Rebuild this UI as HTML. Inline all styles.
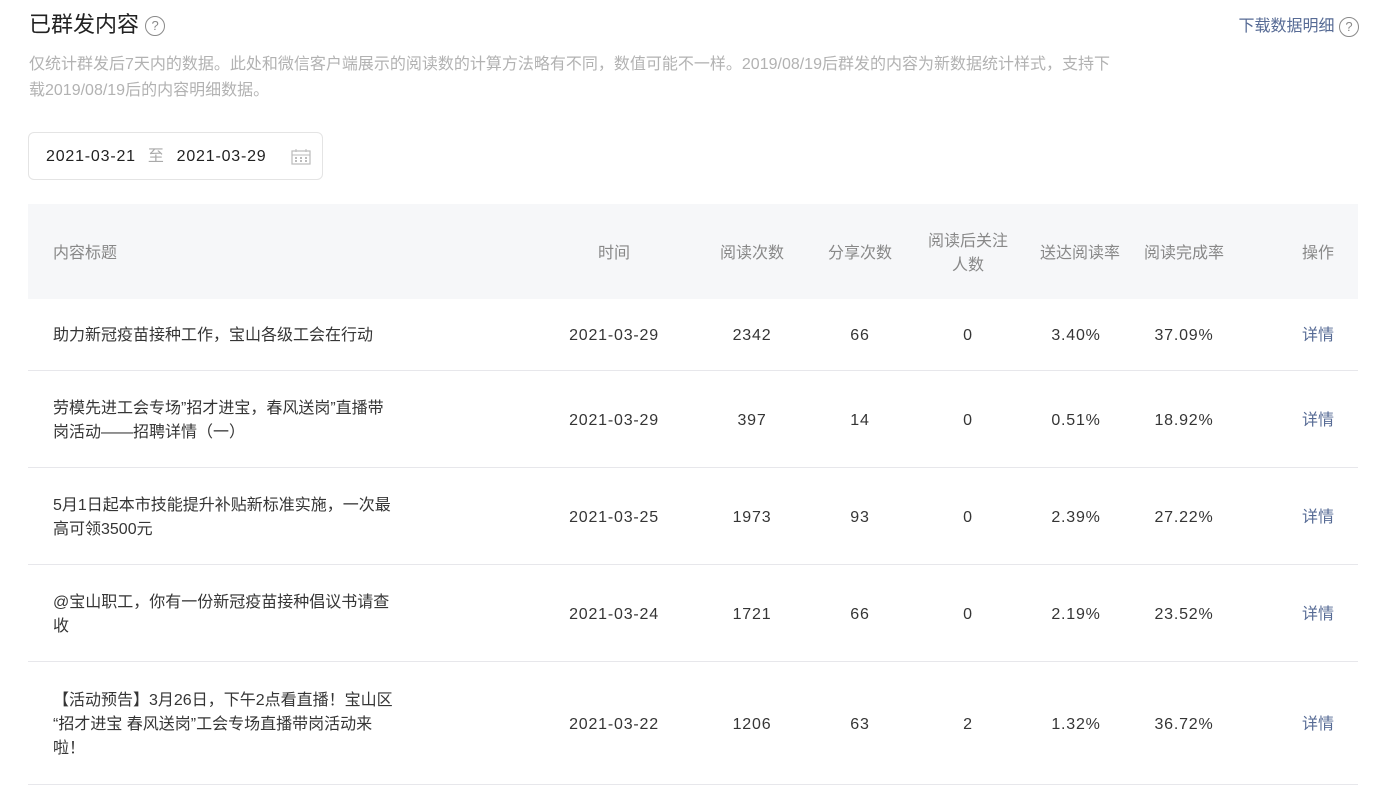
<!DOCTYPE html>
<html><head><meta charset="utf-8"><style>
*{margin:0;padding:0;box-sizing:border-box}
body{width:1390px;height:802px;background:#fff;font-family:"Liberation Sans","Noto Sans CJK SC",sans-serif;color:#353535;position:relative;overflow:hidden}
.q{display:inline-block;width:20px;height:20px;border:1.5px solid #8a8a8a;border-radius:50%;color:#8a8a8a;font-size:13px;line-height:17px;text-align:center;vertical-align:middle}
h1{position:absolute;left:29px;top:9px;font-size:22px;line-height:32px;font-weight:normal;color:#222}
.dl{position:absolute;right:31px;top:14px;font-size:16px;line-height:26px;color:#576b95}
.desc{position:absolute;left:29px;top:52px;width:1170px;font-size:16px;line-height:26px;color:#b2b2b2}
.date{position:absolute;left:28px;top:132px;width:295px;height:48px;border:1px solid #e4e4e4;border-radius:6px;font-size:16px;line-height:48px;padding-left:17px;color:#222;letter-spacing:0.8px}
.date .z{color:#aaa;margin:0 12px}
table{position:absolute;left:28px;top:204px;width:1330px;border-collapse:collapse;font-size:16px;table-layout:fixed}
th{background:#f6f7f9;color:#888;font-weight:normal;height:95px;line-height:24px;white-space:nowrap;overflow:visible;padding-top:4px}
td{border-bottom:1px solid #e7e7eb;line-height:24px;white-space:nowrap;padding-top:4px}
th,td{text-align:center}
td.n{letter-spacing:0.8px}
.t{text-align:left;padding-left:25px}
.op{text-align:right;padding-right:24px}
td.op{color:#576b95}
</style></head><body>
<h1>已群发内容 <span class="q">?</span></h1>
<div class="dl">下载数据明细 <span class="q">?</span></div>
<div class="desc">仅统计群发后7天内的数据。此处和微信客户端展示的阅读数的计算方法略有不同，数值可能不一样。2019/08/19后群发的内容为新数据统计样式，支持下<br>载2019/08/19后的内容明细数据。</div>
<div class="date">2021-03-21<span class="z">至</span>2021-03-29<svg style="position:absolute;left:262px;top:16px" width="20" height="16" viewBox="0 0 20 16"><rect x="1" y="2" width="18" height="13" fill="none" stroke="#bbb" stroke-width="1.2"/><line x1="1" y1="6" x2="19" y2="6" stroke="#bbb"/><line x1="5" y1="0" x2="5" y2="3" stroke="#bbb"/><line x1="15" y1="0" x2="15" y2="3" stroke="#bbb"/><g fill="#bbb"><rect x="4" y="8" width="2" height="2"/><rect x="9" y="8" width="2" height="2"/><rect x="14" y="8" width="2" height="2"/><rect x="4" y="11" width="2" height="2"/><rect x="9" y="11" width="2" height="2"/><rect x="14" y="11" width="2" height="2"/></g></svg></div>
<table>
<colgroup><col style="width:520px"><col style="width:132px"><col style="width:144px"><col style="width:72px"><col style="width:144px"><col style="width:72px"><col style="width:144px"><col style="width:102px"></colgroup>
<tr><th class="t">内容标题</th><th>时间</th><th>阅读次数</th><th>分享次数</th><th>阅读后关注<br>人数</th><th>送达阅读率</th><th>阅读完成率</th><th class="op">操作</th></tr>
<tr style="height:71px"><td class="t">助力新冠疫苗接种工作，宝山各级工会在行动</td><td class="n">2021-03-29</td><td class="n">2342</td><td class="n">66</td><td class="n">0</td><td class="n">3.40%</td><td class="n">37.09%</td><td class="op">详情</td></tr>
<tr style="height:97px"><td class="t">劳模先进工会专场”招才进宝，春风送岗”直播带<br>岗活动——招聘详情（一）</td><td class="n">2021-03-29</td><td class="n">397</td><td class="n">14</td><td class="n">0</td><td class="n">0.51%</td><td class="n">18.92%</td><td class="op">详情</td></tr>
<tr style="height:97px"><td class="t">5月1日起本市技能提升补贴新标准实施，一次最<br>高可领3500元</td><td class="n">2021-03-25</td><td class="n">1973</td><td class="n">93</td><td class="n">0</td><td class="n">2.39%</td><td class="n">27.22%</td><td class="op">详情</td></tr>
<tr style="height:97px"><td class="t">@宝山职工，你有一份新冠疫苗接种倡议书请查<br>收</td><td class="n">2021-03-24</td><td class="n">1721</td><td class="n">66</td><td class="n">0</td><td class="n">2.19%</td><td class="n">23.52%</td><td class="op">详情</td></tr>
<tr style="height:123px"><td class="t">【活动预告】3月26日，下午2点看直播！宝山区<br>“招才进宝 春风送岗”工会专场直播带岗活动来<br>啦！</td><td class="n">2021-03-22</td><td class="n">1206</td><td class="n">63</td><td class="n">2</td><td class="n">1.32%</td><td class="n">36.72%</td><td class="op">详情</td></tr>
</table>
</body></html>
